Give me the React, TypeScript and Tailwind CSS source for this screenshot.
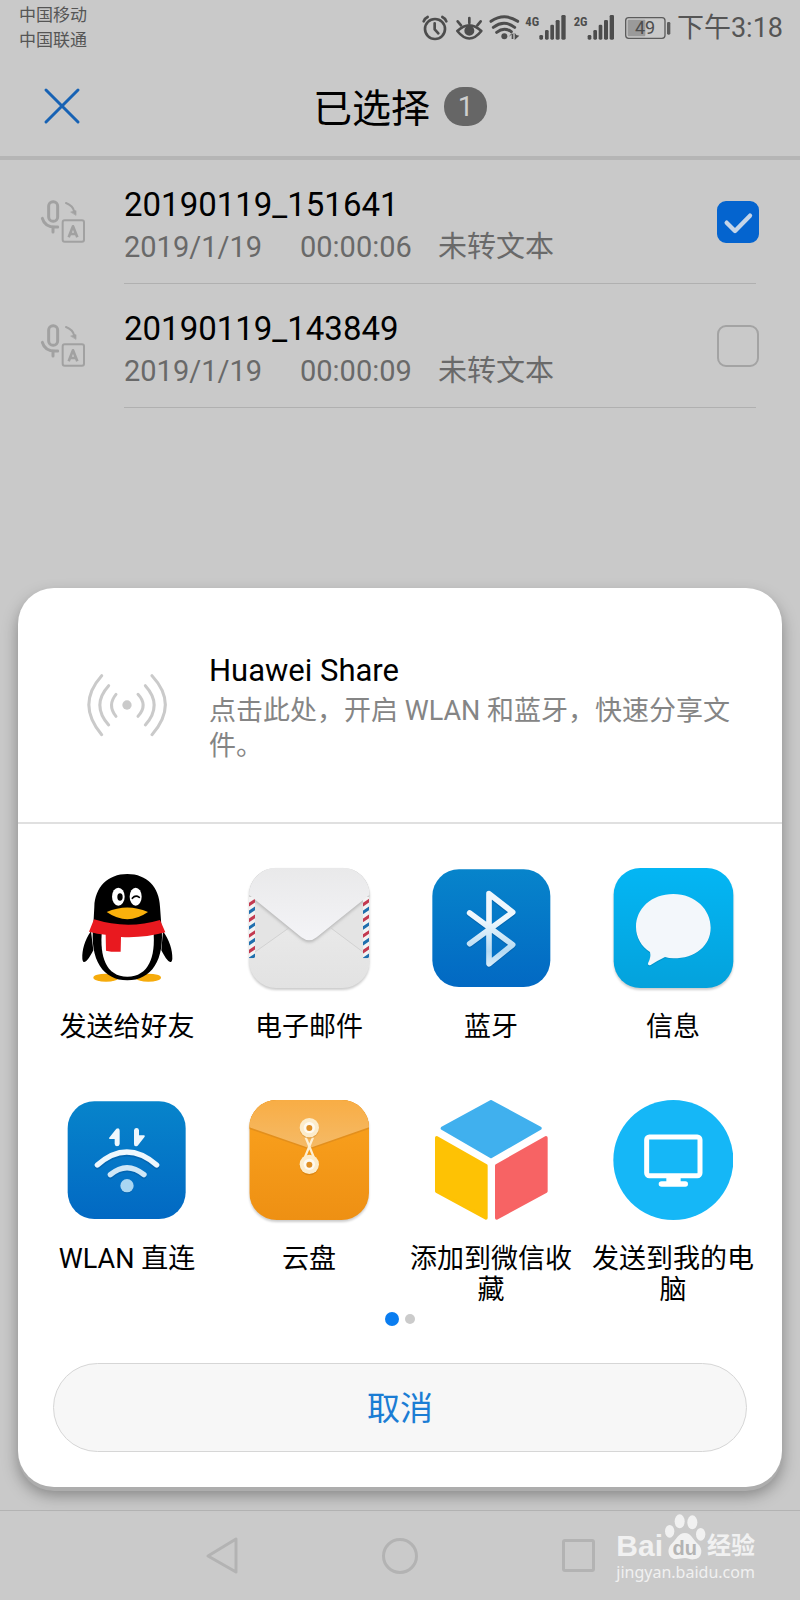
import { useState, type ReactNode } from 'react';

type Recording = { id: string; name: string; date: string; duration: string; status: string };

const recordings: Recording[] = [
  { id: 'r1', name: '20190119_151641', date: '2019/1/19', duration: '00:00:06', status: '未转文本' },
  { id: 'r2', name: '20190119_143849', date: '2019/1/19', duration: '00:00:09', status: '未转文本' },
];

function SignalIcon({ label, viewBox, x }: { label: string; viewBox: string; x: number }) {
  return (
    <svg viewBox={viewBox} className="h-[30px] w-11" fill="#4d4d4d">
      <text x={x - 2} y="74" fontSize="38" fontWeight="700" fontFamily="Roboto Condensed, Roboto, sans-serif">
        {label}
      </text>
      <rect x={x + 40} y="102" width="11" height="14" rx="4" />
      <rect x={x + 57} y="87" width="11" height="29" rx="4" />
      <rect x={x + 73} y="71" width="11" height="45" rx="4" />
      <rect x={x + 89} y="57" width="12" height="59" rx="4" />
      <rect x={x + 106} y="42" width="13" height="74" rx="4" />
    </svg>
  );
}

function StatusBar() {
  return (
    <div className="flex h-14 items-start justify-between pl-[19px] pr-[17px] text-[#555555]">
      <div className="pt-[3px] text-[17px] leading-[25px]">
        <p>中国移动</p>
        <p>中国联通</p>
      </div>
      <div className="flex items-center gap-1 pt-3">
        <svg viewBox="62 36 84 90" className="h-[30px] w-7" fill="none" stroke="#4d4d4d" strokeWidth="8" strokeLinecap="round" strokeLinejoin="round">
          <circle cx="104" cy="84" r="30" />
          <path d="M103 67v18l11 12" />
          <path d="M70 61q3-9 12-13M138 61q-3-9-12-13" />
        </svg>
        <svg viewBox="158 36 96 90" className="h-[30px] w-8" fill="none" stroke="#4d4d4d" strokeWidth="8" strokeLinecap="round" strokeLinejoin="round">
          <path d="M171 90q36-34 72 0q-36 45-72 0z" />
          <circle cx="207" cy="89" r="11" fill="#4d4d4d" />
          <path d="M207 51v15M172 61l10 12M241 61l-10 12" />
        </svg>
        <svg viewBox="266 36 96 90" className="h-[30px] w-8" fill="none" stroke="#4d4d4d" strokeWidth="9" strokeLinecap="round">
          <path d="M272 61q40-27 80 0M279 79q32-24 64 0M289 94q22-17 44-2" />
          <circle cx="312" cy="106" r="9" fill="#4d4d4d" stroke="none" />
          <path d="M325 108l9-12v18h5V96zM343 95v22l14-13-9-2z" fill="#4d4d4d" stroke="none" />
        </svg>
        <SignalIcon label="4G" viewBox="374 36 132 90" x={377} />
        <SignalIcon label="2G" viewBox="518 36 132 90" x={522} />
        <svg viewBox="662 36 156 90" className="h-[30px] w-[52px]">
          <rect x="676" y="50" width="118" height="62" rx="9" fill="none" stroke="#5c5c5c" strokeWidth="4" />
          <rect x="682" y="56" width="53" height="50" rx="3" fill="#9a9a9a" />
          <rect x="800" y="63" width="10" height="38" rx="4" fill="#5c5c5c" />
          <text x="704" y="100" fontSize="54" fontFamily="Roboto, sans-serif" fill="#4d4d4d">
            49
          </text>
        </svg>
        <span className="text-[27px] leading-8">下午3:18</span>
      </div>
    </div>
  );
}

function TranscribeIcon() {
  return (
    <svg viewBox="119 86 138 138" className="size-[46px] shrink-0" fill="none" stroke="#a1a1a1" strokeWidth="9" strokeLinecap="round" strokeLinejoin="round">
      <rect x="145" y="94" width="27" height="59" rx="13" />
      <path d="M126 144q8 29 46 26M158 172v13" />
      <path d="M197 98q21 8 25 26" strokeWidth="6" />
      <path d="M212 125l15-4 0 13z" fill="#a1a1a1" strokeWidth="2" />
      <rect x="187" y="150" width="64" height="64" rx="6" strokeWidth="6" />
      <path d="M205 201l13-33 13 33M210 191h17" strokeWidth="8" strokeLinecap="butt" />
    </svg>
  );
}

function RecordingRow({ item, checked, onToggle }: { item: Recording; checked: boolean; onToggle: () => void }) {
  return (
    <li className="flex h-[124px] items-stretch pl-10 pr-11">
      <div className="flex w-[84px] items-center">
        <TranscribeIcon />
      </div>
      <div className="flex flex-1 items-center justify-between border-b border-[#b0b0b0]">
        <label htmlFor={item.id} className="pt-2">
          <span className="block text-[33px] leading-[42px] text-black">{item.name}</span>
          <span className="flex text-[29px] leading-[42px] text-[#696969]">
            <span className="w-[176px]">{item.date}</span>
            <span className="w-[138px]">{item.duration}</span>
            <span>{item.status}</span>
          </span>
        </label>
        <span className="-mr-[3px] grid size-[42px] shrink-0">
          <input
            id={item.id}
            type="checkbox"
            checked={checked}
            onChange={onToggle}
            className="col-start-1 row-start-1 size-[42px] appearance-none rounded-[9px] border-2 border-[#a3a3a3] checked:border-[#0464cf] checked:bg-[#0464cf]"
          />
          {checked && (
            <svg viewBox="951 423 126 126" className="pointer-events-none col-start-1 row-start-1 size-[42px]" fill="none" stroke="#c5d5e8" strokeWidth="13" strokeLinecap="round" strokeLinejoin="round">
              <path d="M980 488l25 25 45-46" />
            </svg>
          )}
        </span>
      </div>
    </li>
  );
}

function QQIcon() {
  return (
    <svg viewBox="81 54 360 360" className="size-[120px]">
      <ellipse cx="198" cy="383" rx="38" ry="12" fill="#f6ab0b" />
      <ellipse cx="325" cy="383" rx="38" ry="12" fill="#f6ab0b" />
      <path d="M153 244C134 270 126 300 127 326c1 12 7 13 14 5 8-9 14-20 19-30zM369 244c19 26 29 56 28 82-1 12-7 13-14 5-8-9-14-20-19-30z" />
      <path d="M262 72C203 72 165 112 163 170L160 225C148 330 190 391 262 391S376 330 364 225L360 170C358 112 321 72 262 72z" />
      <path d="M186 240c-8 80 12 140 76 140s86-60 78-140z" fill="#fff" />
      <ellipse cx="235" cy="140" rx="19" ry="27" fill="#fff" />
      <ellipse cx="287" cy="140" rx="18" ry="27" fill="#fff" />
      <ellipse cx="240" cy="141" rx="8" ry="11" />
      <path d="M277 145q9-11 21-3" fill="none" stroke="#000" strokeWidth="5" strokeLinecap="round" />
      <path d="M200 186q62-27 124 0q-62 43-124 0z" fill="#f9b00c" />
      <path d="M162 208q100 31 198 2l16 37q-66 18-133 14l-1 44q-22 2-44-3l-1-48q-26-2-50-9z" fill="#e9191f" />
    </svg>
  );
}

const redStripes = [140, 187, 234, 281];
const blueStripes = [163, 210, 257, 304];

function MailIcon() {
  return (
    <svg viewBox="627 54 360 360" className="size-[120px] overflow-visible drop-shadow-[0_2px_1px_#00000033]">
      <defs>
        <linearGradient id="mailBody" x1="0" y1="0" x2="0" y2="1">
          <stop offset="0" stopColor="#f0f0f0" />
          <stop offset="1" stopColor="#e2e2e2" />
        </linearGradient>
        <linearGradient id="mailFlap" x1="0" y1="0" x2="0" y2="1">
          <stop offset="0" stopColor="#e9e9ea" />
          <stop offset="1" stopColor="#f4f4f7" />
        </linearGradient>
        <clipPath id="mailClip">
          <rect x="627" y="53" width="362" height="361" rx="82" />
        </clipPath>
        <clipPath id="mailEdges">
          <path d="M627 140h18v185h-18zM969 140h18v185h-18z" />
        </clipPath>
        <filter id="mailBlur" x="-10%" y="-10%" width="120%" height="120%">
          <feGaussianBlur stdDeviation="5" />
        </filter>
      </defs>
      <g clipPath="url(#mailClip)">
        <rect x="627" y="53" width="362" height="361" fill="url(#mailBody)" />
        <path d="M645 150L745 235 645 306zM969 150L874 235 969 306z" fill="#e4e4e4" />
        <path d="M645 306L745 235M969 306L874 235" stroke="#d2d2d2" strokeWidth="3" />
        <path d="M627 53H989V134L830 262Q808 280 784 262L627 134z" transform="translate(0 6)" fill="#b8b8b8" filter="url(#mailBlur)" />
        <g clipPath="url(#mailEdges)">
          <rect x="627" y="140" width="360" height="185" fill="#f3f3f3" />
          {redStripes.map((y) => (
            <path key={y} d={`M622 ${y + 22}l28-19v11l-28 19zM964 ${y + 22}l28-19v11l-28 19z`} fill="#c33a50" />
          ))}
          {blueStripes.map((y) => (
            <path key={y} d={`M622 ${y + 22}l28-19v11l-28 19zM964 ${y + 22}l28-19v11l-28 19z`} fill="#1f6fae" />
          ))}
        </g>
        <path d="M627 53H989V134L830 262Q808 280 784 262L627 134z" fill="url(#mailFlap)" />
      </g>
    </svg>
  );
}

function BlueTileDefs({ id }: { id: string }) {
  return (
    <linearGradient id={id} x1="0" y1="0" x2="0" y2="1">
      <stop offset="0" stopColor="#0784cb" />
      <stop offset="1" stopColor="#0269c3" />
    </linearGradient>
  );
}

function BluetoothIcon() {
  return (
    <svg viewBox="93 54 360 360" className="size-[120px]">
      <defs>
        <BlueTileDefs id="btTile" />
        <linearGradient id="btGlyph" gradientUnits="userSpaceOnUse" x1="0" y1="120" x2="0" y2="350">
          <stop offset="0.400" stopColor="#eef7fd" />
          <stop offset="0.800" stopColor="#b4daf3" />
          <stop offset="1" stopColor="#d9edfa" />
        </linearGradient>
      </defs>
      <rect x="97" y="58" width="354" height="353" rx="80" fill="url(#btTile)" />
      <g fill="none" strokeWidth="17" strokeLinecap="round" strokeLinejoin="round">
        <path d="M209 193L338 288 267 344V135L338 191 209 285" stroke="#04559c" opacity="0.500" />
        <path d="M209 189L338 284 267 341V131L338 187 209 281" stroke="url(#btGlyph)" />
      </g>
    </svg>
  );
}

function MessageIcon() {
  return (
    <svg viewBox="639 54 360 360" className="size-[120px] overflow-visible drop-shadow-[0_2px_1px_#00000033]">
      <defs>
        <linearGradient id="msgTile" x1="0" y1="0" x2="0" y2="1">
          <stop offset="0" stopColor="#04b6f4" />
          <stop offset="1" stopColor="#04a2dc" />
        </linearGradient>
      </defs>
      <rect x="641" y="54" width="359" height="360" rx="80" fill="url(#msgTile)" />
      <path d="M820 136c-66 0-112 44-112 99 0 32 16 58 42 75q4 16-6 34-1 8 8 5 24-15 43-24 12 2 25 2c66 0 112-38 112-92s-46-99-112-99z" fill="#0388bb" opacity="0.600" />
      <path d="M820 132c-66 0-112 44-112 99 0 32 16 58 42 75q4 16-6 34-1 8 8 5 24-15 43-24 12 4 25 4c66 0 112-38 112-92s-46-101-112-101z" fill="#f3f7fb" />
    </svg>
  );
}

function WlanIcon() {
  return (
    <svg viewBox="81 60 360 360" className="size-[120px]">
      <defs>
        <BlueTileDefs id="wlanTile" />
      </defs>
      <rect x="83" y="64" width="354" height="353" rx="80" fill="url(#wlanTile)" />
      <g fill="none" strokeWidth="16" strokeLinecap="round">
        <path d="M172 260q88-78 178 0M211 289q50-42 101 0" stroke="#04559c" opacity="0.500" />
        <path d="M172 255q88-78 178 0" stroke="#eef7fd" />
        <path d="M211 284q50-42 101 0" stroke="#cfe7f7" />
      </g>
      <circle cx="261" cy="321" r="19" fill="#04559c" opacity="0.500" />
      <circle cx="261" cy="317" r="20" fill="#a9d6f2" />
      <path d="M207 174l22-28q10-5 10 6v40q-1 7-8 7-6 0-7-7v-15h-14q-5-1-3-3zM282 151q1-7 8-7 6 0 7 7v15h15q4 1 2 4l-21 27q-11 5-11-5z" fill="#eef7fd" />
    </svg>
  );
}

function CloudIcon() {
  return (
    <svg viewBox="627 60 360 360" className="size-[120px] overflow-visible drop-shadow-[0_2px_1px_#00000033]">
      <defs>
        <linearGradient id="cloudBody" x1="0" y1="0" x2="0" y2="1">
          <stop offset="0.300" stopColor="#f79d1b" />
          <stop offset="1" stopColor="#ee9013" />
        </linearGradient>
        <linearGradient id="cloudFlap" x1="0" y1="0" x2="0" y2="1">
          <stop offset="0" stopColor="#f8ad45" />
          <stop offset="1" stopColor="#f5ba66" />
        </linearGradient>
        <clipPath id="cloudClip">
          <rect x="628" y="60" width="359" height="360" rx="82" />
        </clipPath>
      </defs>
      <g clipPath="url(#cloudClip)">
        <rect x="628" y="60" width="359" height="360" fill="url(#cloudBody)" />
        <path d="M628 147L792 203Q808 210 824 203L987 147V60H628z" fill="#e38f1c" />
        <path d="M628 142L792 199Q808 206 824 199L987 142V60H628z" fill="url(#cloudFlap)" />
      </g>
      <path d="M797 172L823 236M819 172L793 236" stroke="#fdf0d4" strokeWidth="7" />
      <circle cx="808" cy="147" r="29" fill="#d38b2c" opacity="0.500" />
      <circle cx="808" cy="257" r="29" fill="#c8750c" opacity="0.500" />
      <circle cx="808" cy="143" r="29" fill="#fceccb" />
      <circle cx="808" cy="253" r="29" fill="#fceccb" />
      <circle cx="808" cy="143" r="17" fill="#fffaf0" />
      <circle cx="808" cy="253" r="17" fill="#fffaf0" />
      <circle cx="808" cy="144" r="9" fill="#df8f24" />
      <circle cx="808" cy="254" r="9" fill="#df8f24" />
    </svg>
  );
}

function CubeIcon() {
  return (
    <svg viewBox="93 60 360 360" className="size-[120px]" strokeWidth="10" strokeLinejoin="round">
      <path d="M273 65L420 145 273 230 127 145z" fill="#40b0ee" stroke="#40b0ee" />
      <path d="M110 173L258 257V414L110 334z" fill="#fec204" stroke="#fec204" />
      <path d="M438 173L290 257V414L438 334z" fill="#f76364" stroke="#f76364" />
    </svg>
  );
}

function ComputerIcon() {
  return (
    <svg viewBox="639 60 360 360" className="size-[120px]">
      <circle cx="820" cy="240" r="180" fill="#15b7f7" />
      <rect x="740" y="171" width="160" height="116" rx="8" fill="none" stroke="#fff" strokeWidth="15" />
      <path d="M799 290h43v14h14q8 0 8 8t-8 8h-71q-9 0-9-8t9-8h14z" fill="#fff" />
    </svg>
  );
}

const targets: { label: string; icon: ReactNode }[] = [
  { label: '发送给好友', icon: <QQIcon /> },
  { label: '电子邮件', icon: <MailIcon /> },
  { label: '蓝牙', icon: <BluetoothIcon /> },
  { label: '信息', icon: <MessageIcon /> },
  { label: 'WLAN 直连', icon: <WlanIcon /> },
  { label: '云盘', icon: <CloudIcon /> },
  { label: '添加到微信收藏', icon: <CubeIcon /> },
  { label: '发送到我的电脑', icon: <ComputerIcon /> },
];

function ShareSheet() {
  return (
    <section
      role="dialog"
      aria-label="Huawei Share"
      className="absolute inset-x-[18px] bottom-[113px] rounded-[36px] bg-white shadow-[0_4px_0_#adadad,0_8px_16px_#00000059]"
    >
      <button type="button" className="flex w-full items-center border-b-2 border-[#e0e0e0] pb-[58px] pl-16 pr-10 pt-[57px] text-left">
        <svg viewBox="246 303 270 204" className="mr-[37px] h-[68px] w-[90px] shrink-0" fill="none" stroke="#cacaca" strokeWidth="9" strokeLinecap="round">
          <circle cx="381" cy="405" r="14" fill="#cacaca" stroke="none" />
          <path d="M348 373q-27 33 0 66M414 373q31 33 0 66" />
          <path d="M326 347q-53 58 0 118M436 347q53 58 0 118" />
          <path d="M305 317q-77 86 0 177M456 317q80 86 0 177" />
        </svg>
        <span className="flex-1 pt-[6px]">
          <span className="mb-[3px] block text-[31px] leading-10 text-black">Huawei Share</span>
          <span className="block text-[27px] leading-[35px] text-[#858585]">
            点击此处，开启 WLAN 和蓝牙，快速分享文件。
          </span>
        </span>
      </button>
      <div className="grid grid-cols-4 gap-y-[57px] px-[18px] pt-11">
        {targets.map((t) => (
          <button key={t.label} type="button" className="flex flex-col items-center gap-6 px-[9px]">
            {t.icon}
            <span className="text-[27px] leading-[31px] text-black">{t.label}</span>
          </button>
        ))}
      </div>
      <div className="flex h-[26px] items-center justify-center gap-[6px]">
        <span className="size-[14px] rounded-full bg-[#0a7df0]" />
        <span className="size-[10px] rounded-full bg-[#cbcbcb]" />
      </div>
      <div className="px-[35px] pb-[35px] pt-[31px]">
        <button type="button" className="h-[89px] w-full rounded-full border border-[#d6d6d6] bg-[#f7f7f7] pt-[3px] text-[33px] text-[#1b7dd4]">
          取消
        </button>
      </div>
    </section>
  );
}

function NavBar() {
  return (
    <nav className="flex h-[90px] items-center justify-center gap-[138px] border-t border-[#b3b3b3] bg-[#cacaca]">
      <button type="button" aria-label="返回" className="grid size-10 place-items-center">
        <svg viewBox="0 0 40 40" className="size-10" fill="none" stroke="#b3b3b3" strokeWidth="3" strokeLinejoin="round">
          <path d="M6 20L34 3v33z" />
        </svg>
      </button>
      <button type="button" aria-label="主屏幕" className="grid size-10 place-items-center">
        <span className="size-9 rounded-full border-[3px] border-[#b3b3b3]" />
      </button>
      <button type="button" aria-label="最近任务" className="grid size-10 place-items-center">
        <span className="size-[33px] rounded-[3px] border-[3px] border-[#b3b3b3]" />
      </button>
    </nav>
  );
}

function Watermark() {
  return (
    <div className="absolute bottom-[17px] right-[45px] text-[#f1f1f1]">
      <div className="flex items-end">
        <span className="font-['Liberation_Sans',sans-serif] text-[30px] font-bold leading-[30px]">Bai</span>
        <svg viewBox="783 520 132 144" className="h-12 w-11" fill="#f1f1f1">
          <ellipse cx="803" cy="575" rx="14" ry="19" />
          <ellipse cx="833" cy="545" rx="15" ry="21" />
          <ellipse cx="871" cy="548" rx="15" ry="21" />
          <ellipse cx="896" cy="584" rx="14" ry="19" />
          <path d="M849 580c-20 0-26 20-40 32-16 15-12 46 14 46 12 0 16-3 26-3s15 5 26 4c26-2 30-32 12-47-14-12-20-32-38-32z" />
          <text x="848" y="645" textAnchor="middle" fontSize="60" fontWeight="700" fontFamily="Liberation Sans, sans-serif" fill="#b4b4b4">
            du
          </text>
        </svg>
        <span className="text-[24px] font-bold leading-[30px]">经验</span>
      </div>
      <p className="font-['Noto_Sans',sans-serif] text-[16px] leading-[22px]">jingyan.baidu.com</p>
    </div>
  );
}

export default function App() {
  const [selected, setSelected] = useState<string[]>(['r1']);
  const toggle = (id: string) =>
    setSelected((s) => (s.includes(id) ? s.filter((v) => v !== id) : [...s, id]));

  return (
    <div className="relative flex min-h-screen flex-col overflow-hidden bg-[#c9c9c9] font-[Roboto,'Noto_Sans_CJK_SC',sans-serif]">
      <StatusBar />
      <header className="grid h-[104px] grid-cols-[1fr_auto_1fr] items-center border-b-4 border-[#b5b5b5] px-[42px]">
        <button type="button" aria-label="关闭" className="size-10 justify-self-start">
          <svg viewBox="0 0 40 40" className="size-10" fill="none" stroke="#1762b4" strokeWidth="3" strokeLinecap="round">
            <path d="M4 4L36 36M36 4L4 36" />
          </svg>
        </button>
        <div className="flex items-center gap-[14px]">
          <h1 className="pt-[6px] text-[39px] leading-[50px] text-black">已选择</h1>
          <span className="flex h-[39px] w-[43px] items-center justify-center rounded-[19px] bg-[#666666] pt-[2px] text-[28px] text-[#cfcfcf]">
            {selected.length}
          </span>
        </div>
      </header>
      <ul className="flex-1">
        {recordings.map((r) => (
          <RecordingRow key={r.id} item={r} checked={selected.includes(r.id)} onToggle={() => toggle(r.id)} />
        ))}
      </ul>
      <NavBar />
      <ShareSheet />
      <Watermark />
    </div>
  );
}
